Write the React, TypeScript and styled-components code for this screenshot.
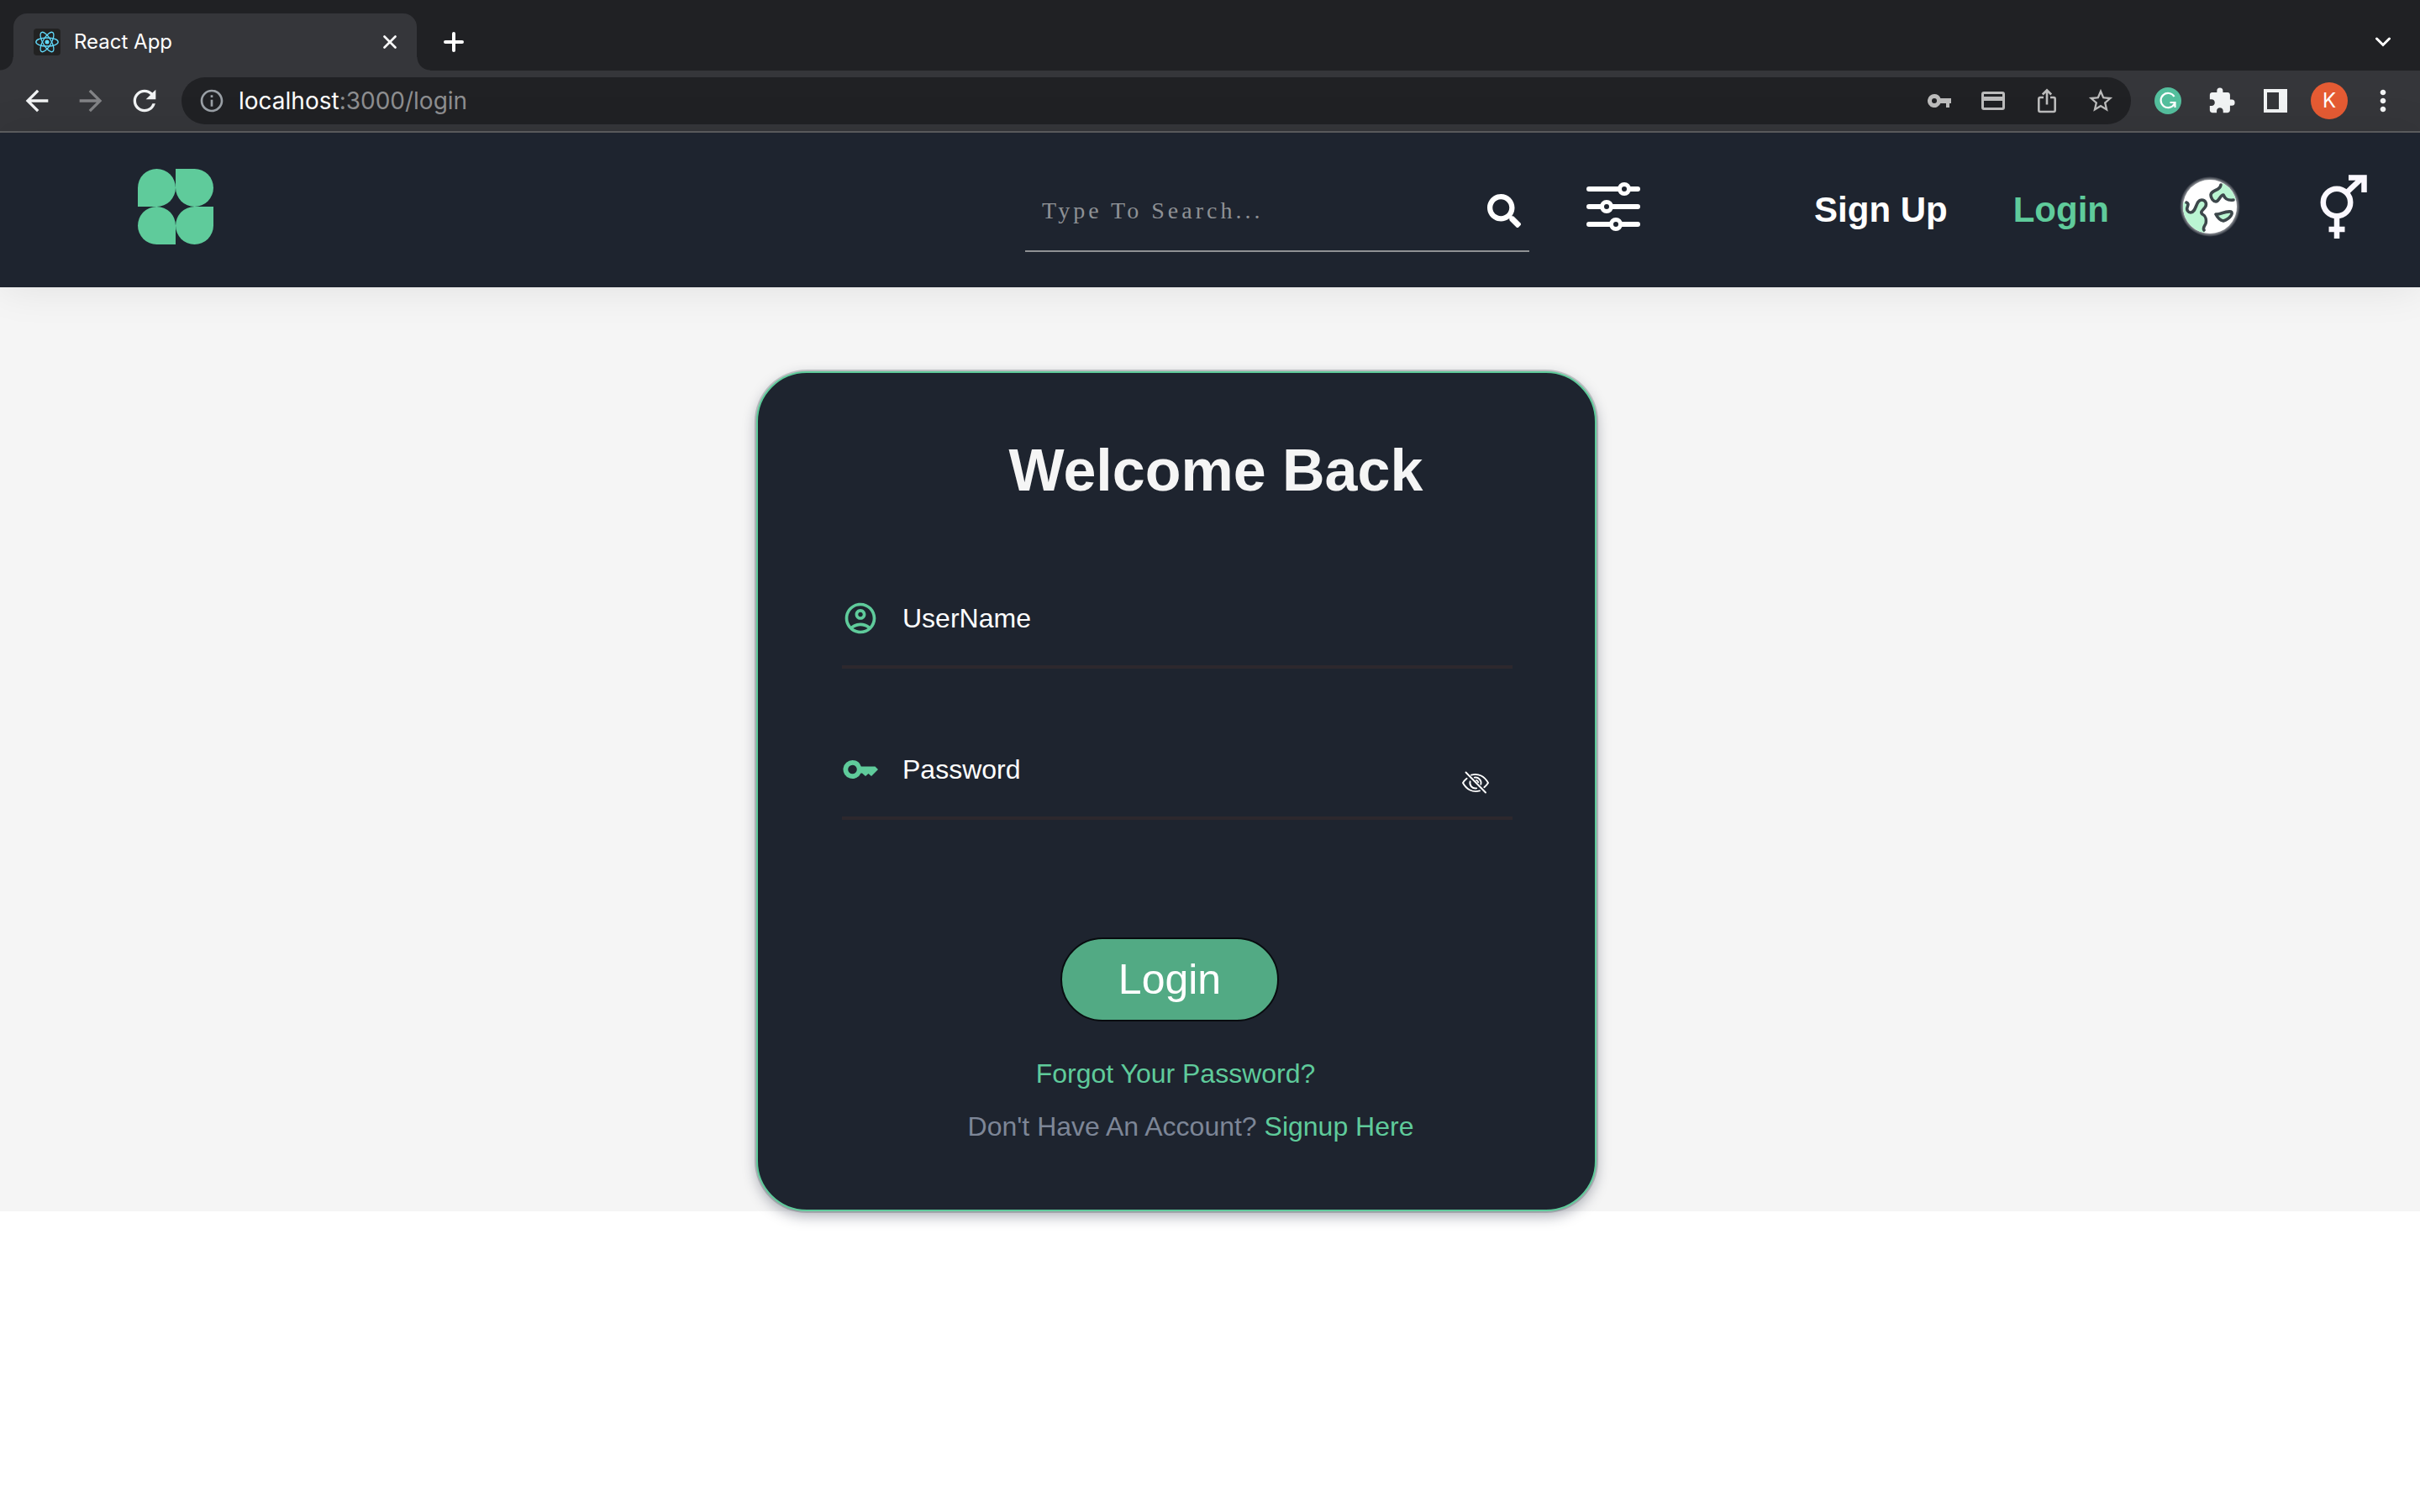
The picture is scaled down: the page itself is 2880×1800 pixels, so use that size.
import React, { useState } from 'react';
import styled, { createGlobalStyle } from 'styled-components';
import { MdArrowBack, MdArrowForward, MdRefresh, MdStarBorder, MdExtension, MdMoreVert, MdInfoOutline } from 'react-icons/md';
import { FaSearch } from 'react-icons/fa';

const green = '#5fcb9b';
const navy = '#1e242f';
const sans = '"Liberation Sans", Arial, sans-serif';
const uiFont = 'Inter, Roboto, sans-serif';

const GlobalStyle = createGlobalStyle`
  *, *::before, *::after { box-sizing: border-box; }
  body { margin: 0; background: #fff; font-family: ${sans}; }
  button { border: 0; padding: 0; background: none; color: inherit; font: inherit; cursor: pointer; }
  input { border: 0; padding: 0; background: none; outline: 0; min-width: 0; }
  a { text-decoration: none; color: inherit; }
  svg { display: block; flex: none; }
`;

const Window = styled.div`
  min-height: 100vh;
  background: #fff;
`;

/* Browser window */
const TabStrip = styled.div`
  display: flex;
  align-items: flex-end;
  height: 84px;
  padding: 0 26px 0 16px;
  background: #202124;
`;

const Tab = styled.div`
  position: relative;
  display: flex;
  align-items: center;
  gap: 16px;
  width: 480px;
  height: 68px;
  padding: 0 24px;
  border-radius: 16px 16px 0 0;
  background: #35363a;
  color: #fff;
  font: 400 24px/32px ${uiFont};
  &::before, &::after {
    content: '';
    position: absolute;
    bottom: 0;
    width: 16px;
    height: 16px;
  }
  &::before {
    right: 100%;
    background: radial-gradient(circle at 0 0, transparent 15px, #35363a 16px);
  }
  &::after {
    left: 100%;
    background: radial-gradient(circle at 100% 0, transparent 15px, #35363a 16px);
  }
`;

const TabTitle = styled.span`
  flex: 1;
`;

const StripButton = styled.button`
  display: grid;
  place-items: center;
  width: 56px;
  height: 68px;
  color: #fff;
`;

const NewTab = styled(StripButton)`
  margin-left: 16px;
`;

const TabSearch = styled(StripButton)`
  width: 36px;
  margin-left: auto;
`;

const Toolbar = styled.div`
  display: flex;
  align-items: center;
  height: 74px;
  padding: 0 12px;
  border-bottom: 2px solid #5d5e60;
  background: #35363a;
`;

const ToolButton = styled.button<{ $dim?: boolean }>`
  display: grid;
  place-items: center;
  width: 64px;
  height: 56px;
  color: ${(p) => (p.$dim ? '#828386' : '#f1f3f4')};
`;

const AddressBar = styled.div`
  display: flex;
  flex: 1;
  align-items: center;
  height: 56px;
  margin: 0 12px;
  padding: 0 4px 0 20px;
  border-radius: 28px;
  background: #202124;
  color: #9aa0a6;
`;

const Url = styled.span`
  flex: 1;
  margin-left: 16px;
  color: #8d8e90;
  font: 400 28px/40px ${uiFont};
  b { color: #fff; font-weight: 400; }
`;

const BarButton = styled(ToolButton)`
  color: #bcbcbc;
`;

const Avatar = styled.span`
  display: grid;
  place-items: center;
  width: 44px;
  height: 44px;
  border-radius: 50%;
  background: #e55b33;
  color: #fff;
  font: 400 24px/44px ${uiFont};
`;

/* Site header */
const Header = styled.header`
  position: relative;
  display: flex;
  align-items: center;
  height: 184px;
  padding: 0 62px 8px 164px;
  background: ${navy};
  box-shadow: 0 0 48px rgba(0, 0, 0, 0.09);
`;

const Logo = styled.a`
  display: grid;
  grid-template-columns: 45px 45px;
  grid-auto-rows: 45px;
  margin-right: auto;
`;

const Petal = styled.span<{ $corners: string }>`
  border-radius: ${(p) => p.$corners};
  background: ${green};
`;

const SearchBox = styled.form`
  display: flex;
  align-items: center;
  width: 600px;
  height: 108px;
  padding: 12px 10px 0 20px;
  border-bottom: 2px solid #8f9194;
`;

const SearchInput = styled.input`
  flex: 1;
  height: 60px;
  color: #fff;
  font: 400 28px/60px "Liberation Serif", "Times New Roman", serif;
  letter-spacing: 4px;
  &::placeholder { color: #8e9195; opacity: 1; }
`;

const IconButton = styled.button`
  color: #fff;
`;

const FilterButton = styled(IconButton)`
  margin: 0 207px 0 68px;
`;

const NavLinks = styled.nav`
  display: flex;
  gap: 78px;
  margin-right: 84px;
  padding-top: 8px;
`;

const NavLink = styled.a<{ $active?: boolean }>`
  color: ${(p) => (p.$active ? green : '#fff')};
  font: 700 42px/48px ${sans};
`;

const GlobeButton = styled(IconButton)`
  margin-right: 94px;
`;

/* Login page */
const Page = styled.main`
  display: flex;
  justify-content: center;
  padding: 100px 80px 0 0;
  background: #f5f5f5;
`;

const Card = styled.section`
  width: 1000px;
  padding: 68px 98px 68px 100px;
  border: 2px solid ${green};
  border-radius: 60px;
  background: ${navy};
  box-shadow: 0 0 0 2px rgba(30, 36, 47, 0.2), 0 6px 16px rgba(30, 40, 60, 0.36);
  text-align: center;
`;

const Title = styled.h1`
  margin: 0 0 68px 92px;
  color: #f5f5f5;
  font: 700 70px/96px ${sans};
`;

const Field = styled.div`
  display: flex;
  align-items: center;
  height: 120px;
  margin-bottom: 60px;
  padding-top: 4px;
  border-bottom: 4px solid #2d282d;
  color: ${green};
`;

const FieldInput = styled.input`
  flex: 1;
  height: 60px;
  margin-left: 28px;
  color: #fff;
  font: 400 32px/60px ${sans};
  &::placeholder { color: #fff; opacity: 1; }
`;

const EyeButton = styled(IconButton)`
  margin: 32px 28px 0 0;
`;

const Actions = styled.div`
  display: flex;
  flex-direction: column;
  align-items: center;
  padding: 80px 18px 30px 0;
`;

const LoginButton = styled.button`
  width: 260px;
  height: 100px;
  border: 2px solid #080c0f;
  border-radius: 50px;
  background: #52aa84;
  color: #fff;
  font: 400 50px/60px ${sans};
`;

const ForgotNote = styled.p`
  margin: 0;
  padding-right: 4px;
  font: 400 32px/64px ${sans};
  a { color: ${green}; }
`;

const SignupNote = styled(ForgotNote)`
  padding: 0 0 0 32px;
  color: #7d8697;
  line-height: 62px;
`;

const ReactLogo = () => (
  <svg width="32" height="32" viewBox="0 0 32 32">
    <rect width="32" height="32" rx="4" fill="#222" />
    <g fill="none" stroke="#61dafb" strokeWidth="1.3">
      <ellipse cx="16" cy="16" rx="13.2" ry="5" />
      <ellipse cx="16" cy="16" rx="13.2" ry="5" transform="rotate(60 16 16)" />
      <ellipse cx="16" cy="16" rx="13.2" ry="5" transform="rotate(120 16 16)" />
    </g>
    <circle cx="16" cy="16" r="2.5" fill="#61dafb" />
  </svg>
);

const CloseIcon = () => (
  <svg width="16" height="16" viewBox="0 0 16 16" stroke="currentColor" strokeWidth="2.6" strokeLinecap="round">
    <path d="M1.5 1.5l13 13M14.5 1.5l-13 13" />
  </svg>
);

const PlusIcon = () => (
  <svg width="24" height="24" viewBox="0 0 24 24" stroke="currentColor" strokeWidth="4" strokeLinecap="round">
    <path d="M12 2v20M2 12h20" />
  </svg>
);

const ChevronIcon = () => (
  <svg width="18" height="12" viewBox="0 0 18 12" fill="none" stroke="currentColor" strokeWidth="3" strokeLinecap="round">
    <path d="M1.5 2L9 9.5 16.5 2" />
  </svg>
);

const CardIcon = () => (
  <svg width="28" height="28" viewBox="0 0 28 28" fill="none" stroke="currentColor" strokeWidth="3">
    <rect x="1.5" y="4.5" width="25" height="19" rx="1.5" />
    <path d="M1 11.5h26" strokeWidth="5" />
  </svg>
);

const ShareIcon = () => (
  <svg width="28" height="32" viewBox="0 0 28 32" fill="none" stroke="currentColor" strokeWidth="2.6">
    <path d="M10 12H6a1.7 1.7 0 0 0-1.7 1.7v13.6A1.7 1.7 0 0 0 6 29h16a1.7 1.7 0 0 0 1.7-1.7V13.7A1.7 1.7 0 0 0 22 12h-4" />
    <path d="M14 20.5V4M8.8 8.5L14 3.3l5.2 5.2" />
  </svg>
);

const PasswordKeyIcon = () => (
  <svg width="28" height="20" viewBox="0 0 28 20" fill="currentColor" fillRule="evenodd">
    <path d="M8 2a8 8 0 1 0 7.4 11H22v5h4v-5h2V7H15.4A8 8 0 0 0 8 2zm0 5a3 3 0 1 1 0 6 3 3 0 0 1 0-6z" />
  </svg>
);

const GrammarIcon = () => (
  <svg width="32" height="32" viewBox="0 0 32 32">
    <circle cx="16" cy="16" r="16" fill="#54bf9d" />
    <path d="M23.5 11A8.6 8.6 0 1 0 23.8 19.5M18.5 18h6v6" fill="none" stroke="#fff" strokeWidth="2.2" />
  </svg>
);

const SidePanelIcon = () => (
  <svg width="28" height="28" viewBox="0 0 28 28" fill="currentColor">
    <path fillRule="evenodd" d="M0 0h28v28H0zM4 4v20h14V4z" />
  </svg>
);

const SlidersIcon = () => (
  <svg width="64" height="64" viewBox="0 0 64 64" fill={navy} stroke="currentColor" strokeWidth="6" strokeLinecap="round">
    <path d="M3 11h58M3 32h58M3 53h58" />
    <g strokeWidth="5">
      <circle cx="45" cy="11" r="5.5" />
      <circle cx="24" cy="32" r="5.5" />
      <circle cx="35" cy="53" r="5.5" />
    </g>
  </svg>
);

const GlobeIcon = () => (
  <svg width="72" height="72" viewBox="0 0 72 72">
    <defs>
      <radialGradient id="halo">
        <stop offset="0.88" stopColor="#fff" stopOpacity="0.55" />
        <stop offset="1" stopColor="#fff" stopOpacity="0" />
      </radialGradient>
      <clipPath id="disc"><circle cx="36" cy="36" r="32" /></clipPath>
    </defs>
    <circle cx="36" cy="36" r="36" fill="url(#halo)" />
    <circle cx="36" cy="36" r="32" fill="#fff" />
    <g clipPath="url(#disc)">
      <path d="M7 31c3 1 3 3 2 6s1 6 4 6c7 0 6-15 13-15 5 0 7 5 4 9-3 4-6 5-3 8 4 2 5 7 4 11-1 3-3 5-1 8l-2 8H0V31z" fill="#baf5d2" />
      <path d="M49 9c-1 8-11 5-12 13 0 4 3 8 6 8 4 0 5-8 9-8 2 5 5 7 16 6V4z" fill="#baf5d2" />
      <path d="M43 45c5 1 10-4 18-3 3 1 0 8-9 11-5-1-7-4-9-8z" fill="#baf5d2" />
    </g>
    <g fill="none" stroke="#3d474b" strokeWidth="3.6" strokeLinecap="round" strokeLinejoin="round">
      <path d="M8 31c3 1 2 3 1 6s1 6 4 6c7 0 6-15 13-15 5 0 7 5 4 9-3 4-6 5-3 8 4 2 5 7 4 11-1 3-4 5-2 8" />
      <path d="M49 10c-1 8-11 5-12 12 0 4 3 8 6 8 4 0 5-8 9-8 2 5 5 7 12 6" />
      <path d="M43 45c5 1 10-4 18-3 3 1 0 8-9 11-5-1-7-4-9-8z" />
    </g>
  </svg>
);

const GenderIcon = () => (
  <svg width="58" height="78" viewBox="0 0 58 78" fill="none" stroke="#fbf8ff" strokeWidth="6.5">
    <circle cx="21" cy="34" r="16.2" />
    <path d="M33 22L51 5M35 4.5h18.5V22M21 50v27M11.5 66h19" />
  </svg>
);

const UserIcon = () => (
  <svg width="44" height="44" viewBox="0 0 24 24" fill="currentColor">
    <path d="M12 2C6.48 2 2 6.48 2 12s4.48 10 10 10 10-4.48 10-10S17.52 2 12 2zM7.35 18.5C8.66 17.56 10.26 17 12 17s3.34.56 4.65 1.5C15.34 19.44 13.74 20 12 20s-3.34-.56-4.65-1.5zm10.79-1.38a9.947 9.947 0 0 0-12.28 0A7.957 7.957 0 0 1 4 12c0-4.42 3.58-8 8-8s8 3.58 8 8c0 1.95-.7 3.73-1.86 5.12z" />
    <path d="M12 6c-1.93 0-3.5 1.57-3.5 3.5S10.07 13 12 13s3.5-1.57 3.5-3.5S13.93 6 12 6zm0 5c-.83 0-1.5-.67-1.5-1.5S11.17 8 12 8s1.5.67 1.5 1.5S12.83 11 12 11z" />
  </svg>
);

const KeyIcon = () => (
  <svg width="44" height="44" viewBox="0 0 44 44" fill="currentColor" fillRule="evenodd">
    <path d="M12.5 11a11 11 0 1 0 10 15.5h1.5l4 3.5 3.5-3 3.5 3 8-8-3.5-3.5H22.8A11 11 0 0 0 12.5 11zm0 5.7a5.3 5.3 0 1 1 0 10.6 5.3 5.3 0 0 1 0-10.6z" />
  </svg>
);

const EyeOffIcon = () => (
  <svg width="32" height="28" viewBox="0 -2 32 28" fill="none" stroke="currentColor" strokeWidth="1.9" strokeLinecap="round">
    <path d="M11 2.6C19.500 0 27 4.500 31 12c-1.200 2-2.800 3.800-4.600 5.200" />
    <path d="M21 21.400C12.500 24 5 19.500 1 12c1.200-2 2.800-3.800 4.600-5.200" />
    <path d="M14.800 5.600a6.500 6.500 0 0 1 7.500 8.100M9.600 10.300a6.500 6.500 0 0 0 7.600 8.100" />
    <path d="M17 8.900a3.200 3.200 0 0 1 2.200 2.400" />
    <path d="M4.500-.5L28 23.500" />
  </svg>
);

export default function App() {
  const [shown, setShown] = useState(false);
  return (
    <Window>
      <GlobalStyle />
      <TabStrip>
        <Tab>
          <ReactLogo />
          <TabTitle>React App</TabTitle>
          <button aria-label="Close tab"><CloseIcon /></button>
        </Tab>
        <NewTab aria-label="New tab"><PlusIcon /></NewTab>
        <TabSearch aria-label="Search tabs"><ChevronIcon /></TabSearch>
      </TabStrip>
      <Toolbar>
        <ToolButton aria-label="Back"><MdArrowBack size={40} /></ToolButton>
        <ToolButton aria-label="Forward" $dim><MdArrowForward size={40} /></ToolButton>
        <ToolButton aria-label="Reload"><MdRefresh size={40} /></ToolButton>
        <AddressBar>
          <MdInfoOutline size={32} />
          <Url><b>localhost</b>:3000/login</Url>
          <BarButton aria-label="Passwords"><PasswordKeyIcon /></BarButton>
          <BarButton aria-label="Payment methods"><CardIcon /></BarButton>
          <BarButton aria-label="Share"><ShareIcon /></BarButton>
          <BarButton aria-label="Bookmark"><MdStarBorder size={34} /></BarButton>
        </AddressBar>
        <ToolButton aria-label="Grammar"><GrammarIcon /></ToolButton>
        <ToolButton aria-label="Extensions"><MdExtension size={34} /></ToolButton>
        <ToolButton aria-label="Side panel"><SidePanelIcon /></ToolButton>
        <ToolButton aria-label="Profile"><Avatar>K</Avatar></ToolButton>
        <ToolButton aria-label="Menu"><MdMoreVert size={40} /></ToolButton>
      </Toolbar>
      <Header>
        <Logo href="#" aria-label="Home">
          <Petal $corners="50% 50% 50% 0" />
          <Petal $corners="0 50% 50% 50%" />
          <Petal $corners="50% 50% 0 50%" />
          <Petal $corners="50% 0 50% 50%" />
        </Logo>
        <SearchBox onSubmit={(e) => e.preventDefault()}>
          <SearchInput aria-label="Search" placeholder="Type To Search..." />
          <IconButton aria-label="Search"><FaSearch size={40} /></IconButton>
        </SearchBox>
        <FilterButton aria-label="Filters"><SlidersIcon /></FilterButton>
        <NavLinks>
          <NavLink href="#signup">Sign Up</NavLink>
          <NavLink href="#login" $active>Login</NavLink>
        </NavLinks>
        <GlobeButton aria-label="Language"><GlobeIcon /></GlobeButton>
        <IconButton aria-label="Gender"><GenderIcon /></IconButton>
      </Header>
      <Page>
        <Card>
          <Title>Welcome Back</Title>
          <form onSubmit={(e) => e.preventDefault()}>
            <Field>
              <UserIcon />
              <FieldInput aria-label="UserName" placeholder="UserName" />
            </Field>
            <Field>
              <KeyIcon />
              <FieldInput aria-label="Password" placeholder="Password" type={shown ? 'text' : 'password'} />
              <EyeButton type="button" aria-label="Show password" onClick={() => setShown(!shown)}>
                <EyeOffIcon />
              </EyeButton>
            </Field>
            <Actions>
              <LoginButton type="submit">Login</LoginButton>
            </Actions>
          </form>
          <ForgotNote><a href="#forgot">Forgot Your Password?</a></ForgotNote>
          <SignupNote>Don't Have An Account? <a href="#signup">Signup Here</a></SignupNote>
        </Card>
      </Page>
    </Window>
  );
}
